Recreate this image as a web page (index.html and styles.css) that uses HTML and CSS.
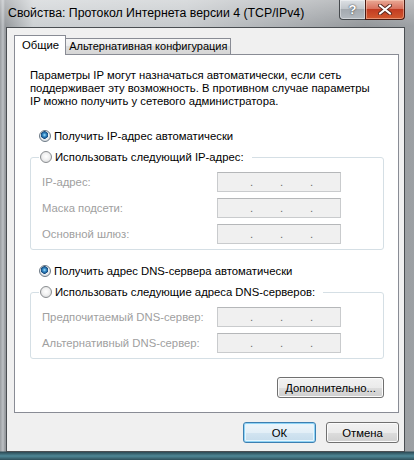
FILE: index.html
```html
<!DOCTYPE html>
<html lang="ru">
<head>
  <meta charset="UTF-8" />
  <title>Свойства: Протокол Интернета версии 4 (TCP/IPv4)</title>
  <link rel="stylesheet" href="styles.css">
</head>
<body>
  <div class="window">
    <div class="titlebar">
      <span class="title">Свойства: Протокол Интернета версии 4 (TCP/IPv4)</span>
      <div class="caption-buttons">
        <span class="cap-btn help">?</span>
        <span class="cap-btn close">
          <svg width="14" height="11" viewBox="0 0 14 11">
            <path d="M2 1.5 L12 9.5 M12 1.5 L2 9.5" stroke="#5a2a20" stroke-width="4" stroke-linecap="round" fill="none"/>
            <path d="M2 1.5 L12 9.5 M12 1.5 L2 9.5" stroke="#fff" stroke-width="2.2" stroke-linecap="round" fill="none"/>
          </svg>
        </span>
      </div>
    </div>

    <div class="client">
      <div class="tabs">
        <span class="tab active">Общие</span>
        <span class="tab">Альтернативная конфигурация</span>
      </div>

      <div class="panel">
        <p class="intro">Параметры IP могут назначаться автоматически, если сеть<br>поддерживает эту возможность. В противном случае параметры<br>IP можно получить у сетевого администратора.</p>

        <label class="option first"><span class="radio checked"></span>Получить IP-адрес автоматически</label>
        <fieldset class="group">
          <legend><label class="option"><span class="radio"></span>Использовать следующий IP-адрес:</label></legend>
          <div class="field"><span class="field-label">IP-адрес:</span><span class="ip-box"><i>.</i><i>.</i><i>.</i></span></div>
          <div class="field"><span class="field-label">Маска подсети:</span><span class="ip-box"><i>.</i><i>.</i><i>.</i></span></div>
          <div class="field"><span class="field-label">Основной шлюз:</span><span class="ip-box"><i>.</i><i>.</i><i>.</i></span></div>
        </fieldset>

        <label class="option dns"><span class="radio checked"></span>Получить адрес DNS-сервера автоматически</label>
        <fieldset class="group">
          <legend><label class="option"><span class="radio"></span>Использовать следующие адреса DNS-серверов:</label></legend>
          <div class="field"><span class="field-label">Предпочитаемый DNS-сервер:</span><span class="ip-box"><i>.</i><i>.</i><i>.</i></span></div>
          <div class="field"><span class="field-label">Альтернативный DNS-сервер:</span><span class="ip-box"><i>.</i><i>.</i><i>.</i></span></div>
        </fieldset>

        <div class="panel-actions">
          <button class="btn wide">Дополнительно...</button>
        </div>
      </div>

      <div class="footer">
        <button class="btn default">ОК</button>
        <button class="btn">Отмена</button>
      </div>
    </div>
  </div>
</body>
</html>
```

FILE: styles.css
```css
* {
  box-sizing: border-box;
}

body {
  margin: 0;
  background: #7d8185;
  font-family: "Liberation Sans", Arial, sans-serif;
  font-size: 11.3px;
  color: #000;
}

/* window frame */
.window {
  width: 414px;
  height: 460px;
  display: flex;
  flex-direction: column;
  padding: 0 9px 8px 6px;
  background:
    linear-gradient(180deg, rgba(255,255,255,0) 0, rgba(255,255,255,0) 451px, #2c4a55 452px, #4f8796 456px, #2f4f5a 460px),
    linear-gradient(180deg, rgba(255,255,255,0.4) 0, rgba(255,255,255,0.1) 26px),
    linear-gradient(90deg, #8d9195 0, #b7bbbf 3px, #8a8e92 5px, #c8cccf 8%, #c0c4c7 45%, #a2a6aa 70%, #888c90 88%, #92969a 100%);
}

.titlebar {
  height: 27px;
  display: flex;
  align-items: flex-start;
}

.title {
  padding-left: 2px;
  line-height: 26px;
  font-size: 12.3px;
  white-space: nowrap;
}

.caption-buttons {
  margin-left: auto;
  display: flex;
}

.cap-btn {
  height: 20px;
  display: flex;
  align-items: center;
  justify-content: center;
  border: 1px solid #45494d;
  border-top: none;
}

.cap-btn.help {
  width: 26px;
  border-right: none;
  border-radius: 0 0 0 4px;
  background: linear-gradient(180deg, #dde1e5 0, #c2c7cc 45%, #a4aab0 50%, #b3b9bf 100%);
  color: #fff;
  font-weight: bold;
  font-size: 13px;
  text-shadow: 0 0 2px #4a4f54, 0 0 1px #4a4f54;
  box-shadow: inset 0 0 0 1px rgba(255,255,255,0.4);
}

.cap-btn.close {
  width: 40px;
  border-color: #4a1a12;
  border-radius: 0 0 4px 0;
  background: linear-gradient(180deg, #e9a996 0, #d9735f 45%, #c23c22 50%, #d2592f 100%);
  box-shadow: inset 0 0 0 1px rgba(255,220,200,0.45);
}

/* client area */
.client {
  flex: 1;
  display: flex;
  flex-direction: column;
  background: #f0f0f0;
  border: 1px solid #4a4e52;
  padding: 0 5px 0 7px;
}

.tabs {
  display: flex;
  align-items: flex-end;
  height: 26px;
  padding-top: 7px;
}

.tab {
  height: 16px;
  padding: 0 3px;
  font-size: 11px;
  line-height: 15px;
  border: 1px solid #898c95;
  border-bottom: none;
  border-left: none;
  background: linear-gradient(180deg, #f6f6f6 0, #ebebeb 50%, #dddddd 50%, #d6d6d6 100%);
  white-space: nowrap;
}

.tab.active {
  position: relative;
  z-index: 1;
  height: 20px;
  margin-bottom: -1px;
  padding: 0 6px 0 7px;
  font-size: 11.3px;
  line-height: 19px;
  border-left: 1px solid #898c95;
  background: #fff;
}

.panel {
  flex: 1;
  display: flex;
  flex-direction: column;
  background: #fff;
  border: 1px solid #898c95;
  padding: 14px 14px 14px 15px;
}

.intro {
  margin: 0;
  line-height: 13px;
}

.option {
  display: flex;
  align-items: center;
  height: 14px;
  line-height: 14px;
  white-space: nowrap;
}

.option.first {
  margin-top: 21px;
  padding-left: 9px;
}

.option.dns {
  margin-top: 14px;
  padding-left: 9px;
}

.radio {
  width: 12px;
  height: 12px;
  margin-right: 3px;
  border-radius: 50%;
  border: 1px solid #8a8d90;
  background: radial-gradient(circle at 50% 45%, #ffffff 0, #f1f1f1 45%, #cfd1d3 100%);
  flex: none;
}

.radio.checked {
  border-color: #6d7a86;
  background:
    radial-gradient(circle at 45% 40%, #a9e1fb 0, #3d94cf 1.5px, #14497e 3.5px, rgba(20,73,126,0) 4px),
    radial-gradient(circle at 50% 45%, #ffffff 0, #eef1f3 45%, #c9cdd1 100%);
}

.group {
  margin: 7px 0 0 0;
  padding: 8px 0 5px 0;
  border: 1px solid #d5dfe5;
  border-radius: 3px;
}

.group legend {
  margin-left: 8px;
  padding: 0 8px 0 1px;
}

.field {
  display: grid;
  grid-template-columns: 175px 124px;
  align-items: center;
  height: 20px;
  padding-left: 11px;
}

.field + .field {
  margin-top: 6px;
}

.field-label {
  color: #a0a0a0;
  white-space: nowrap;
}

.ip-box {
  height: 20px;
  display: flex;
  align-items: center;
  gap: 27px;
  padding-left: 32px;
  background: #f0f0f0;
  border: 1px solid #c9cbcd;
  border-top-color: #b5b7b9;
  color: #6d6d6d;
}

.ip-box i {
  font-style: normal;
  width: 3px;
  line-height: 13px;
}

.panel-actions {
  margin-top: auto;
  display: flex;
  justify-content: flex-end;
}

/* buttons */
.btn {
  height: 21px;
  width: 73px;
  padding: 0;
  font-family: inherit;
  font-size: 11.3px;
  color: #000;
  border: 1px solid #707070;
  border-radius: 3px;
  background: linear-gradient(180deg, #f2f2f2 0, #ebebeb 50%, #dddddd 50%, #cfcfcf 100%);
  box-shadow: inset 0 0 0 1px #fbfbfb;
}

.btn.wide {
  width: 107px;
}

.btn.default {
  border-color: #3c7fb1;
  background: linear-gradient(180deg, #eef6fb 0, #e3eff7 50%, #d3e5f1 50%, #c5dcec 100%);
  box-shadow: inset 0 0 0 1px #8fd3f5, inset 0 0 0 2px #e6f5fd;
}

.footer {
  display: flex;
  justify-content: flex-end;
  gap: 10px;
  padding: 9px 0 8px;
}
```
